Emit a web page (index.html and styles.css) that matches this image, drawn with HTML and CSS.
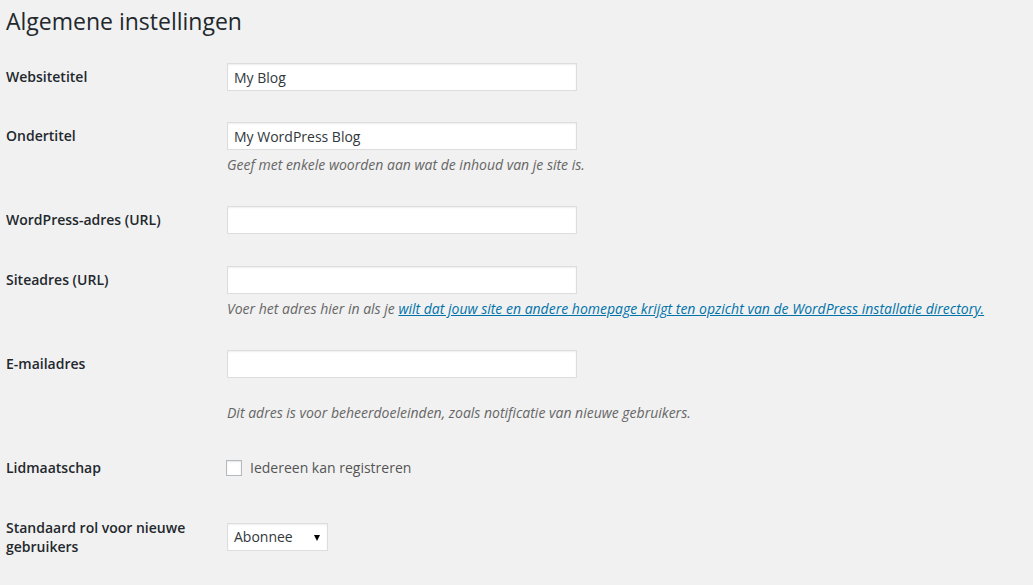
FILE: index.html
```html
<!DOCTYPE html>
<html lang="nl">
<head>
<meta charset="utf-8">
<title>Algemene instellingen</title>
<link rel="stylesheet" href="styles.css">
</head>
<body>
<div class="wrap">
  <h1 class="title">Algemene instellingen</h1>
  <div class="form">
    <div class="row first">
      <div class="th">Websitetitel</div>
      <div class="td"><input class="text" type="text" value="My Blog"></div>
    </div>
    <div class="row">
      <div class="th">Ondertitel</div>
      <div class="td">
        <input class="text" type="text" value="My WordPress Blog">
        <p class="description">Geef met enkele woorden aan wat de inhoud van je site is.</p>
      </div>
    </div>
    <div class="row">
      <div class="th">WordPress-adres (URL)</div>
      <div class="td"><input class="text" type="text" value=""></div>
    </div>
    <div class="row">
      <div class="th">Siteadres (URL)</div>
      <div class="td">
        <input class="text" type="text" value="">
        <p class="description">Voer het adres hier in als je <a href="#">wilt dat jouw site en andere homepage krijgt ten opzicht van de WordPress installatie directory.</a></p>
      </div>
    </div>
    <div class="row">
      <div class="th">E-mailadres</div>
      <div class="td">
        <input class="text" type="text" value="">
        <p class="description spaced">Dit adres is voor beheerdoeleinden, zoals notificatie van nieuwe gebruikers.</p>
      </div>
    </div>
    <div class="row">
      <div class="th">Lidmaatschap</div>
      <div class="td">
        <label class="check"><span class="box"></span>Iedereen kan registreren</label>
      </div>
    </div>
    <div class="row">
      <div class="th">Standaard rol voor nieuwe gebruikers</div>
      <div class="td">
        <span class="select">Abonnee</span>
      </div>
    </div>
  </div>
</div>
</body>
</html>
```

FILE: styles.css
```css
html, body {
  margin: 0;
  padding: 0;
  background: #f1f1f1;
}
body {
  font-family: "Open Sans", "Noto Sans", sans-serif;
  font-size: 14px;
  color: #444;
}
.wrap {
  padding-left: 6px;
}
.title {
  margin: 0;
  padding: 7px 0 0;
  font-size: 23px;
  font-weight: 400;
  line-height: 29px;
  color: #23282d;
}
.form {
  margin-top: 11px;
}
.row {
  display: grid;
  grid-template-columns: 200px 1fr;
  column-gap: 10px;
}
.th {
  padding: 20px 0;
  font-weight: 600;
  line-height: 19px;
  color: #23282d;
  align-self: start;
}
.td {
  padding: 15px 10px;
  align-self: center;
  line-height: 1.3;
}
.row.first .td {
  padding-bottom: 14px;
}
.text {
  display: block;
  box-sizing: border-box;
  width: 350px;
  height: 28px;
  margin: 1px;
  padding: 3px 6px;
  border: 1px solid #ddd;
  box-shadow: inset 0 1px 2px rgba(0,0,0,0.07);
  background: #fff;
  font-family: "Open Sans", "Noto Sans", sans-serif;
  font-size: 14px;
  color: #32373c;
  outline: none;
}
.description {
  margin: 4px 0 0 1px;
  font-size: 14px;
  font-style: italic;
  line-height: 21px;
  color: #666;
}
.description.spaced {
  margin-top: 24px;
}
.description a {
  color: #0073aa;
  text-decoration: underline;
}
.check {
  display: flex;
  align-items: center;
  height: 30px;
  color: #555;
}
.box {
  display: inline-block;
  box-sizing: border-box;
  width: 16px;
  height: 16px;
  margin-right: 8px;
  border: 1px solid #b4b9be;
  background: #fff;
  box-shadow: inset 0 1px 2px rgba(0,0,0,0.1);
}
.select {
  position: relative;
  display: block;
  box-sizing: border-box;
  width: 101px;
  height: 28px;
  margin: 1px;
  padding: 0 6px;
  border: 1px solid #ddd;
  background: #fff;
  box-shadow: inset 0 1px 2px rgba(0,0,0,0.07);
  line-height: 26px;
  color: #32373c;
}
.select::after {
  content: "";
  position: absolute;
  right: 7px;
  top: 11px;
  border-left: 3.5px solid transparent;
  border-right: 3.5px solid transparent;
  border-top: 6px solid #000;
}
```
